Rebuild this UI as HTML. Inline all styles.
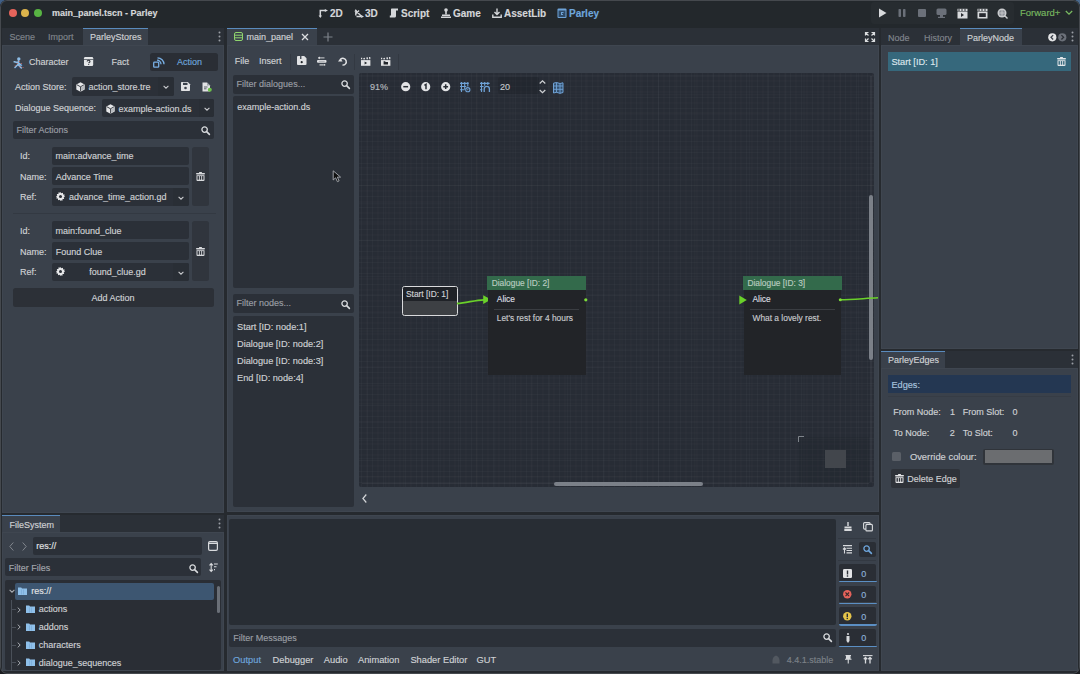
<!DOCTYPE html>
<html><head><meta charset="utf-8">
<style>
*{box-sizing:border-box;margin:0;padding:0}
html,body{width:1080px;height:674px;overflow:hidden;background:#1b1d21}
.corner{position:absolute;width:8px;height:8px;background:#3f5f86}
body{position:relative;font-family:"Liberation Sans",sans-serif;font-size:9px;color:#cfd1d4}
.a{position:absolute}
.t{position:absolute;white-space:pre;line-height:12px;height:12px;-webkit-text-stroke:0.15px currentColor}
.dim{color:#80858c}
.ph{color:#9a9ea4}
.blue{color:#6ea6dc}
.win{left:0;top:0;width:1080px;height:674px;background:#262a2f;border-radius:7px;overflow:hidden}
.title{left:0;top:0;width:1080px;height:28px;background:#23282c}
.tabbar{background:#2b3037}
.panel{background:#3a414b;box-shadow:inset 0 0 0 1px #3f4650}
.tab{background:#3a414b;border-top:1.5px solid #5a8bbd}
.inp{background:#2b3038;border-radius:2px}
.sep{background:#2c3038}
svg{position:absolute;overflow:visible}
</style></head><body>
<div class="corner" style="left:0;top:0"></div><div class="corner" style="right:0;top:0;background:#4a6a8e"></div>
<div class="a win">
  <!-- title bar -->
  <div class="a title"></div>
  <div class="a" style="left:8.5px;top:8.5px;width:8px;height:8px;border-radius:50%;background:#e5645b"></div>
  <div class="a" style="left:21px;top:8.5px;width:8px;height:8px;border-radius:50%;background:#dcb44c"></div>
  <div class="a" style="left:33.5px;top:8.5px;width:8px;height:8px;border-radius:50%;background:#58b443"></div>
  <div class="t" style="left:52px;top:7px;font-weight:bold;color:#d6d8da">main_panel.tscn - Parley</div>

  
  <!-- main toolbar -->
  <svg style="left:317.8px;top:8.8px" width="10" height="9" viewBox="0 0 10 9"><path d="M2.3 7.2V1.5H7.5" fill="none" stroke="#d4d6d9" stroke-width="1.5"/><path d="M6.8 0L10 1.5 6.8 3z" fill="#d4d6d9"/><path d="M0.6 6.4L2.3 9 4 6.4z" fill="#d4d6d9"/></svg>
  <div class="t" style="left:330px;top:7.8px;font-weight:bold;font-size:10px;color:#d4d6d9">2D</div>
  <svg style="left:353.8px;top:8.8px" width="10" height="9" viewBox="0 0 10 9"><path d="M1.8 2.4V6.5M1.8 1.8L7.5 7.3M5 1.5L1.5 5M2.5 7.5H7.6" fill="none" stroke="#d4d6d9" stroke-width="1.4"/><path d="M0.3 2.6L1.8 0 3.3 2.6z" fill="#d4d6d9"/><path d="M7.2 6L10 7.5 7.2 9z" fill="#d4d6d9"/></svg>
  <div class="t" style="left:365px;top:7.8px;font-weight:bold;font-size:10px;color:#d4d6d9">3D</div>
  <svg style="left:389px;top:8px" width="10" height="10" viewBox="0 0 10 10"><path d="M3 0.5h6v2h-2v5.5c0 1-0.8 1.5-1.5 1.5H0.8v-2H2V1.5c0-0.6 0.4-1 1-1z" fill="#d4d6d9"/></svg>
  <div class="t" style="left:401px;top:7.8px;font-weight:bold;font-size:10px;color:#d4d6d9">Script</div>
  <svg style="left:441px;top:8px" width="10" height="10" viewBox="0 0 10 10"><circle cx="5" cy="2" r="1.8" fill="#d4d6d9"/><rect x="4.2" y="3" width="1.6" height="3.5" fill="#d4d6d9"/><rect x="1" y="6.5" width="8" height="1.5" fill="#d4d6d9"/><rect x="0" y="8.5" width="10" height="1.5" fill="#d4d6d9"/></svg>
  <div class="t" style="left:453px;top:7.8px;font-weight:bold;font-size:10px;color:#d4d6d9">Game</div>
  <svg style="left:492px;top:8px" width="10" height="10" viewBox="0 0 10 10"><path d="M5 0.5v6M2.5 4l2.5 2.5L7.5 4M0.8 6.5v2.8h8.4V6.5" fill="none" stroke="#d4d6d9" stroke-width="1.4"/></svg>
  <div class="t" style="left:504px;top:7.8px;font-weight:bold;font-size:10px;color:#d4d6d9">AssetLib</div>
  <svg style="left:557px;top:8px" width="10" height="10" viewBox="0 0 10 10"><rect x="0.5" y="0.5" width="9" height="9.5" rx="1" fill="#6ea3d8"/><rect x="1.5" y="2.5" width="7" height="6.5" fill="#2f4a66"/><path d="M4 4h2.5v1H5v1h1v1H4z" fill="#6ea3d8"/></svg>
  <div class="t" style="left:569px;top:7.8px;font-weight:bold;font-size:10px;color:#6ea6dc">Parley</div>

  <!-- run bar -->
  <div class="a" style="left:871px;top:2px;width:143px;height:22px;background:#272c30;border-radius:3px"></div>
  <svg style="left:878px;top:8px" width="9" height="10" viewBox="0 0 9 10"><path d="M1 0.5L8.5 5 1 9.5z" fill="#d8dadd"/></svg>
  <svg style="left:898px;top:9px" width="8" height="8" viewBox="0 0 8 8"><rect x="0.5" y="0" width="2.5" height="8" rx="0.8" fill="#6b7079"/><rect x="5" y="0" width="2.5" height="8" rx="0.8" fill="#6b7079"/></svg>
  <svg style="left:918px;top:9px" width="8" height="8" viewBox="0 0 8 8"><rect x="0" y="0" width="8" height="8" rx="1" fill="#6b7079"/></svg>
  <svg style="left:936px;top:8px" width="11" height="10" viewBox="0 0 11 10"><rect x="0.5" y="0.5" width="10" height="6.5" rx="1.5" fill="#6b7079"/><rect x="4" y="7" width="3" height="2" fill="#6b7079"/><rect x="2" y="8.8" width="7" height="1.2" fill="#6b7079"/></svg>
  <svg style="left:957px;top:8px" width="11" height="11" viewBox="0 0 11 11"><path d="M0.5 3.5h10v7h-10z" fill="#d8dadd"/><path d="M0.5 0.8l10 0v2.2h-10z" fill="#d8dadd"/><path d="M2 0.8v2.2M5 0.8v2.2M8 0.8v2.2" stroke="#272a30" stroke-width="1"/><path d="M4 5l3 2-3 2z" fill="#272a30"/></svg>
  <svg style="left:977px;top:8px" width="11" height="11" viewBox="0 0 11 11"><path d="M0.5 3.5h10v7h-10z" fill="#d8dadd"/><path d="M0.5 0.8l10 0v2.2h-10z" fill="#d8dadd"/><path d="M2 0.8v2.2M5 0.8v2.2M8 0.8v2.2" stroke="#272a30" stroke-width="1"/><rect x="2.2" y="5.2" width="6.6" height="3.8" fill="#272a30"/></svg>
  <svg style="left:997px;top:8px" width="11" height="11" viewBox="0 0 11 11"><circle cx="5" cy="5" r="4.5" fill="#c9cbce"/><circle cx="5" cy="5" r="3" fill="#8c9097"/><path d="M2 5h6M5 2v6" stroke="#c9cbce" stroke-width="0.9"/><path d="M7.5 7.5l3 3" stroke="#c9cbce" stroke-width="1.4"/></svg>
  <div class="t" style="left:1020px;top:7px;font-size:9.5px;color:#78b860">Forward+</div>
  <svg style="left:1065px;top:10px" width="8" height="6" viewBox="0 0 8 6"><path d="M0.8 1l3.2 3.2L7.2 1" fill="none" stroke="#78b860" stroke-width="1.3"/></svg>

  <!-- left dock tab bar -->
  <div class="a tabbar" style="left:2px;top:28px;width:222px;height:17px"></div>
  <div class="a panel" style="left:2px;top:45px;width:222px;height:468px"></div>

  <!-- filesystem dock -->
  <div class="a tabbar" style="left:2px;top:515px;width:222px;height:17px"></div>
  <div class="a panel" style="left:2px;top:532px;width:222px;height:139px"></div>

  <!-- main panel -->
  <div class="a tabbar" style="left:227px;top:28px;width:652px;height:17px"></div>
  <div class="a panel" style="left:227px;top:45px;width:652px;height:467px"></div>

  <!-- bottom panel -->
  <div class="a panel" style="left:227px;top:515px;width:652px;height:156px"></div>

  <!-- right dock -->
  <div class="a tabbar" style="left:881px;top:28px;width:197px;height:17px"></div>
  <div class="a panel" style="left:881px;top:45px;width:197px;height:304px"></div>
  <div class="a tabbar" style="left:881px;top:351px;width:197px;height:17px"></div>
  <div class="a panel" style="left:881px;top:368px;width:197px;height:303px"></div>


  <!-- ===== left dock content ===== -->
  <svg style="left:13px;top:57px" width="12" height="13" viewBox="0 0 12 13"><circle cx="5.8" cy="1.9" r="1.7" fill="#8dbce6"/><path d="M5.5 3.8L5 7.5M1.2 4.8L5.3 5.8 8.5 8.3M5 7.5L2 10.5M5 7.5L8.3 11" fill="none" stroke="#8dbce6" stroke-width="1.6" stroke-linecap="round"/><circle cx="6.3" cy="4.5" r="0.55" fill="#d6685f"/><circle cx="4.3" cy="6.5" r="0.55" fill="#d6685f"/><circle cx="8.6" cy="6.5" r="0.55" fill="#d6685f"/><circle cx="2.2" cy="8.8" r="0.55" fill="#d6685f"/><circle cx="7" cy="9.6" r="0.55" fill="#d6685f"/><circle cx="10" cy="10.5" r="0.55" fill="#d6685f"/><circle cx="9.2" cy="8" r="0.7" fill="#24446e"/><circle cx="4.5" cy="10.5" r="0.7" fill="#24446e"/><circle cx="6.5" cy="11.5" r="0.7" fill="#24446e"/><circle cx="10.5" cy="9" r="0.6" fill="#24446e"/><circle cx="3.5" cy="11.8" r="0.6" fill="#24446e"/></svg>
<div class="t " style="left:29px;top:56.18px;">Character</div>
  <svg style="left:83.7px;top:57.2px" width="9.2" height="9" viewBox="0 0 9.2 9"><rect width="9.2" height="9" rx="1.3" fill="#e4e6e8"/><rect x="0" y="2" width="9.2" height="0.7" fill="#3a414b"/><path d="M3.2 4.6c0-0.9 0.6-1.3 1.4-1.3s1.4 0.5 1.4 1.1c0 0.9-1.2 0.9-1.2 1.8" fill="none" stroke="#2a2e35" stroke-width="1.1"/><rect x="4.2" y="7.1" width="1" height="0.9" fill="#2a2e35"/></svg>
<div class="t " style="left:111.5px;top:56.18px;">Fact</div>
  <div class="a" style="left:150px;top:52.5px;width:68px;height:18.5px;background:#2a2e35;border-radius:2.5px"></div>
  <svg style="left:153px;top:56.5px" width="12" height="11" viewBox="0 0 12 11"><rect x="0.7" y="5.2" width="5" height="5" rx="0.8" fill="none" stroke="#78aee3" stroke-width="1.3"/><path d="M4 3.2a4 4 0 0 1 4 4M4.5 0.8a6.5 6.5 0 0 1 6.5 6.5" fill="none" stroke="#78aee3" stroke-width="1.3"/></svg>
<div class="t blue" style="left:177px;top:56.18px;">Action</div>
<div class="t " style="left:15px;top:80.78px;">Action Store:</div>
  <div class="a inp" style="left:72px;top:77px;width:102px;height:18.5px"></div>
  <div class="a" style="left:158px;top:77px;width:16px;height:18.5px;background:#292e35;border-radius:0 2px 2px 0"></div>
<svg style="left:76px;top:81.5px" width="9" height="10" viewBox="0 0 9 10"><path d="M4.5 0.3L8.7 2.5v5L4.5 9.7 0.3 7.5v-5z" fill="#e6e7e9"/><path d="M0.8 2.7L4.5 4.8 8.2 2.7M4.5 4.8v4.6" fill="none" stroke="#2a2e35" stroke-width="0.9"/><path d="M4.9 5.2L8.2 3.4v3.9L4.9 9.1z" fill="#b8bbbf"/></svg><div class="t " style="left:88.5px;top:81.08px;">action_store.tre</div><svg style="left:163px;top:85px" width="6" height="4" viewBox="0 0 6 4"><path d="M0.6 0.8L3 3.2 5.4 0.8" fill="none" stroke="#c8cacd" stroke-width="1.1"/></svg>
  <svg style="left:181px;top:82px" width="9" height="9" viewBox="0 0 9 9"><path d="M0 1c0-0.6 0.4-1 1-1h5.8L9 2.2V8c0 0.6-0.4 1-1 1H1C0.4 9 0 8.6 0 8z" fill="#e1e2e4"/><rect x="2" y="0.8" width="4.5" height="2.2" fill="#3a414b"/><circle cx="4.5" cy="6" r="1.3" fill="#3a414b"/></svg>
  <svg style="left:201.5px;top:81.5px" width="10" height="10" viewBox="0 0 10 10"><path d="M0.5 0.5h4.5l3 3V9.5h-7.5z" fill="#e1e2e4"/><path d="M5 0.5v3h3" fill="#9ea2a8"/><path d="M2 5h3.5M2 6.8h2.5" stroke="#3a414b" stroke-width="0.8"/><circle cx="7.8" cy="7.8" r="2" fill="#6cc04a"/></svg>
<div class="t " style="left:15px;top:102.48px;">Dialogue Sequence:</div>
  <div class="a inp" style="left:102px;top:99px;width:112px;height:18px"></div>
  <div class="a" style="left:198.5px;top:99px;width:15.5px;height:18px;background:#292e35;border-radius:0 2px 2px 0"></div>
<svg style="left:105.5px;top:103.5px" width="9" height="10" viewBox="0 0 9 10"><path d="M4.5 0.3L8.7 2.5v5L4.5 9.7 0.3 7.5v-5z" fill="#e6e7e9"/><path d="M0.8 2.7L4.5 4.8 8.2 2.7M4.5 4.8v4.6" fill="none" stroke="#2a2e35" stroke-width="0.9"/><path d="M4.9 5.2L8.2 3.4v3.9L4.9 9.1z" fill="#b8bbbf"/></svg><div class="t " style="left:118.5px;top:102.68px;">example-action.ds</div><svg style="left:203.5px;top:107px" width="6" height="4" viewBox="0 0 6 4"><path d="M0.6 0.8L3 3.2 5.4 0.8" fill="none" stroke="#c8cacd" stroke-width="1.1"/></svg>
  <div class="a inp" style="left:12.5px;top:121px;width:201.5px;height:18px"></div>
<div class="t ph" style="left:16.5px;top:123.98px;">Filter Actions</div><svg style="left:200.5px;top:125.5px" width="9" height="9" viewBox="0 0 9 9"><circle cx="3.6" cy="3.6" r="2.7" fill="none" stroke="#d8dadd" stroke-width="1.3"/><path d="M5.6 5.6L8.4 8.4" stroke="#d8dadd" stroke-width="1.6" stroke-linecap="round"/></svg>
<div class="t " style="left:20px;top:150.08px;">Id:</div><div class="t " style="left:20px;top:170.78px;">Name:</div><div class="t " style="left:20px;top:191.38px;">Ref:</div><div class="a inp" style="left:52px;top:146.5px;width:137px;height:18px"></div><div class="a inp" style="left:52px;top:167.3px;width:137px;height:18.2px"></div><div class="a inp" style="left:52px;top:188.3px;width:137px;height:18px"></div><div class="a" style="left:173px;top:188.3px;width:16px;height:18px;background:#292e35;border-radius:0 2px 2px 0"></div><div class="a" style="left:191.8px;top:146.5px;width:17px;height:59.8px;background:#30353d;border-radius:2.5px"></div><div class="t " style="left:55.5px;top:150.08px;">main:advance_time</div><div class="t " style="left:55.8px;top:170.78px;">Advance Time</div><div class="t " style="left:69px;top:191.38px;">advance_time_action.gd</div><svg style="left:55.8px;top:192.0px" width="9" height="9" viewBox="0 0 9 9"><path d="M4.5 0l0.9 1.3 1.5-0.5 0.2 1.6 1.6 0.2-0.5 1.5L9 4.5l-1.3 0.9 0.5 1.5-1.6 0.2-0.2 1.6-1.5-0.5L4.5 9l-0.9-1.3-1.5 0.5-0.2-1.6-1.6-0.2 0.5-1.5L0 4.5l1.3-0.9-0.5-1.5 1.6-0.2 0.2-1.6 1.5 0.5z" fill="#e6e7e9"/><circle cx="4.5" cy="4.5" r="1.5" fill="#2b3038"/></svg><svg style="left:178px;top:196.0px" width="6" height="4" viewBox="0 0 6 4"><path d="M0.6 0.8L3 3.2 5.4 0.8" fill="none" stroke="#c8cacd" stroke-width="1.1"/></svg><svg style="left:196px;top:172.0px" width="9" height="9" viewBox="0 0 9 9"><rect x="3" y="0" width="3" height="1.2" rx="0.4" fill="#d8dadd"/><rect x="0" y="0.9" width="9" height="1.7" rx="0.8" fill="#d8dadd"/><path d="M0.5 3.2h8v4.9c0 0.5-0.4 0.9-0.9 0.9H1.4c-0.5 0-0.9-0.4-0.9-0.9z" fill="#d8dadd"/><rect x="1.5" y="4.1" width="1.4" height="3.6" fill="#2c3038"/><rect x="3.8" y="4.1" width="1.4" height="3.6" fill="#2c3038"/><rect x="6.1" y="4.1" width="1.4" height="3.6" fill="#2c3038"/></svg><div class="a" style="left:12.5px;top:213px;width:203px;height:1px;background:#333942"></div><div class="t " style="left:20px;top:224.88px;">Id:</div><div class="t " style="left:20px;top:245.58px;">Name:</div><div class="t " style="left:20px;top:266.18px;">Ref:</div><div class="a inp" style="left:52px;top:221.3px;width:137px;height:18px"></div><div class="a inp" style="left:52px;top:242.10000000000002px;width:137px;height:18.2px"></div><div class="a inp" style="left:52px;top:263.1px;width:137px;height:18px"></div><div class="a" style="left:173px;top:263.1px;width:16px;height:18px;background:#292e35;border-radius:0 2px 2px 0"></div><div class="a" style="left:191.8px;top:221.3px;width:17px;height:59.8px;background:#30353d;border-radius:2.5px"></div><div class="t " style="left:55.5px;top:224.88px;">main:found_clue</div><div class="t " style="left:55.8px;top:245.58px;">Found Clue</div><div class="t " style="left:89.2px;top:266.18px;">found_clue.gd</div><svg style="left:55.8px;top:266.8px" width="9" height="9" viewBox="0 0 9 9"><path d="M4.5 0l0.9 1.3 1.5-0.5 0.2 1.6 1.6 0.2-0.5 1.5L9 4.5l-1.3 0.9 0.5 1.5-1.6 0.2-0.2 1.6-1.5-0.5L4.5 9l-0.9-1.3-1.5 0.5-0.2-1.6-1.6-0.2 0.5-1.5L0 4.5l1.3-0.9-0.5-1.5 1.6-0.2 0.2-1.6 1.5 0.5z" fill="#e6e7e9"/><circle cx="4.5" cy="4.5" r="1.5" fill="#2b3038"/></svg><svg style="left:178px;top:270.8px" width="6" height="4" viewBox="0 0 6 4"><path d="M0.6 0.8L3 3.2 5.4 0.8" fill="none" stroke="#c8cacd" stroke-width="1.1"/></svg><svg style="left:196px;top:246.8px" width="9" height="9" viewBox="0 0 9 9"><rect x="3" y="0" width="3" height="1.2" rx="0.4" fill="#d8dadd"/><rect x="0" y="0.9" width="9" height="1.7" rx="0.8" fill="#d8dadd"/><path d="M0.5 3.2h8v4.9c0 0.5-0.4 0.9-0.9 0.9H1.4c-0.5 0-0.9-0.4-0.9-0.9z" fill="#d8dadd"/><rect x="1.5" y="4.1" width="1.4" height="3.6" fill="#2c3038"/><rect x="3.8" y="4.1" width="1.4" height="3.6" fill="#2c3038"/><rect x="6.1" y="4.1" width="1.4" height="3.6" fill="#2c3038"/></svg><div class="a" style="left:12.7px;top:288.4px;width:201.5px;height:18.6px;background:#2c3037;border-radius:2.5px"></div><div class="t " style="left:91.5px;top:292.08px;">Add Action</div>
  <!-- ===== filesystem ===== -->
<svg style="left:9px;top:541.5px" width="5" height="9" viewBox="0 0 5 9"><path d="M4.3 0.5L0.8 4.5 4.3 8.5" fill="none" stroke="#81868d" stroke-width="1"/></svg><svg style="left:21.5px;top:541.5px" width="5" height="9" viewBox="0 0 5 9"><path d="M0.7 0.5L4.2 4.5 0.7 8.5" fill="none" stroke="#81868d" stroke-width="1"/></svg><div class="a" style="left:33px;top:537px;width:168.5px;height:18px;background:#2b3038;border-radius:2px"></div><div class="t " style="left:36.3px;top:540.08px;color:#e2e3e5">res://</div><svg style="left:208px;top:541px" width="10" height="10" viewBox="0 0 10 10"><rect x="0.6" y="0.6" width="8.8" height="8.8" rx="1.3" fill="none" stroke="#d8dadd" stroke-width="1.2"/><path d="M0.6 2.4h8.8" stroke="#d8dadd" stroke-width="1.2"/></svg><div class="a" style="left:5.2px;top:558.3px;width:196.3px;height:18.2px;background:#2b3038;border-radius:2px"></div><div class="t " style="left:8.8px;top:561.68px;color:#a3a7ad">Filter Files</div><svg style="left:188.6px;top:563.5px" width="9" height="9" viewBox="0 0 9 9"><circle cx="3.6" cy="3.6" r="2.7" fill="none" stroke="#d8dadd" stroke-width="1.3"/><path d="M5.6 5.6L8.4 8.4" stroke="#d8dadd" stroke-width="1.6" stroke-linecap="round"/></svg><svg style="left:208.5px;top:563px" width="9" height="9" viewBox="0 0 9 9"><path d="M2.2 0.8v7.4M0.5 2.3L2.2 0.6 3.9 2.3M0.5 6.7l1.7 1.7 1.7-1.7M5 1h3.8M5 3.8h2.5M5 6.6h1" fill="none" stroke="#d8dadd" stroke-width="1.1"/></svg><div class="a" style="left:5.2px;top:580.2px;width:216px;height:90px;background:#2a2e35;border-radius:2px"></div><div class="a" style="left:15px;top:582.5px;width:199px;height:17.2px;background:#3d5671;border-radius:2px"></div><svg style="left:8.8px;top:589.3px" width="6" height="4" viewBox="0 0 6 4"><path d="M0.6 0.8L3 3.2 5.4 0.8" fill="none" stroke="#a8acb2" stroke-width="1.1"/></svg><svg style="left:18.2px;top:587px" width="9" height="8" viewBox="0 0 9 8"><path d="M0 0.5h3.2l0.8 1H9V8H0z" fill="#8fc0ea"/><path d="M3.5 2.5v5M5.5 2.5v5" stroke="#5b8fc0" stroke-width="0.5" opacity="0.6"/></svg><div class="t " style="left:31.2px;top:584.78px;color:#e2e3e5">res://</div><div class="a" style="left:216.5px;top:586px;width:3.6px;height:27px;background:#6a6f77;border-radius:2px"></div><div class="a" style="left:10.8px;top:600px;width:1px;height:71px;background:#4a5059;"></div><div class="a" style="left:11.8px;top:609.0px;width:4px;height:1px;background:#4a5059;"></div><svg style="left:17px;top:606.5px" width="4" height="6" viewBox="0 0 4 6"><path d="M0.7 0.6L3.2 3 0.7 5.4" fill="none" stroke="#a8acb2" stroke-width="1"/></svg><svg style="left:25.5px;top:605.0px" width="9" height="8" viewBox="0 0 9 8"><path d="M0 0.5h3.2l0.8 1H9V8H0z" fill="#8fc0ea"/><path d="M3.5 2.5v5M5.5 2.5v5" stroke="#5b8fc0" stroke-width="0.5" opacity="0.6"/></svg><div class="t " style="left:38.8px;top:603.38px;">actions</div><div class="a" style="left:11.8px;top:626.8px;width:4px;height:1px;background:#4a5059;"></div><svg style="left:17px;top:624.3px" width="4" height="6" viewBox="0 0 4 6"><path d="M0.7 0.6L3.2 3 0.7 5.4" fill="none" stroke="#a8acb2" stroke-width="1"/></svg><svg style="left:25.5px;top:622.8px" width="9" height="8" viewBox="0 0 9 8"><path d="M0 0.5h3.2l0.8 1H9V8H0z" fill="#8fc0ea"/><path d="M3.5 2.5v5M5.5 2.5v5" stroke="#5b8fc0" stroke-width="0.5" opacity="0.6"/></svg><div class="t " style="left:38.8px;top:621.18px;">addons</div><div class="a" style="left:11.8px;top:644.6px;width:4px;height:1px;background:#4a5059;"></div><svg style="left:17px;top:642.1px" width="4" height="6" viewBox="0 0 4 6"><path d="M0.7 0.6L3.2 3 0.7 5.4" fill="none" stroke="#a8acb2" stroke-width="1"/></svg><svg style="left:25.5px;top:640.6px" width="9" height="8" viewBox="0 0 9 8"><path d="M0 0.5h3.2l0.8 1H9V8H0z" fill="#8fc0ea"/><path d="M3.5 2.5v5M5.5 2.5v5" stroke="#5b8fc0" stroke-width="0.5" opacity="0.6"/></svg><div class="t " style="left:38.8px;top:638.98px;">characters</div><div class="a" style="left:11.8px;top:662.4px;width:4px;height:1px;background:#4a5059;"></div><svg style="left:17px;top:659.9px" width="4" height="6" viewBox="0 0 4 6"><path d="M0.7 0.6L3.2 3 0.7 5.4" fill="none" stroke="#a8acb2" stroke-width="1"/></svg><svg style="left:25.5px;top:658.4px" width="9" height="8" viewBox="0 0 9 8"><path d="M0 0.5h3.2l0.8 1H9V8H0z" fill="#8fc0ea"/><path d="M3.5 2.5v5M5.5 2.5v5" stroke="#5b8fc0" stroke-width="0.5" opacity="0.6"/></svg><div class="t " style="left:38.8px;top:656.78px;">dialogue_sequences</div>
  <!-- ===== main panel ===== -->
<div class="t " style="left:234.8px;top:55.48px;">File</div><div class="t " style="left:258.9px;top:55.48px;">Insert</div><div class="a" style="left:290px;top:53.5px;width:1px;height:16px;background:#333942;"></div><div class="a" style="left:353.7px;top:53.5px;width:1px;height:16px;background:#333942;"></div><div class="a" style="left:397.5px;top:53.5px;width:1px;height:16px;background:#333942;"></div><svg style="left:297px;top:56.4px" width="9.5" height="9" viewBox="0 0 9.5 9"><path d="M0 0.9C0 0.4 0.4 0 0.9 0h6.3l2.3 2.3v5.8c0 0.5-0.4 0.9-0.9 0.9H0.9C0.4 9 0 8.6 0 8.1z" fill="#e1e2e4"/><rect x="3.1" y="0" width="1.3" height="3" fill="#3a414b"/><circle cx="4.7" cy="6.2" r="1.1" fill="#1e2227"/></svg><svg style="left:317px;top:56.6px" width="9.5" height="9" viewBox="0 0 9.5 9"><path d="M2.5 0.9h5M1.3 0.9l1.2-0.8v1.6z" stroke="#e1e2e4" stroke-width="0.9" fill="#e1e2e4"/><rect x="0" y="2.9" width="9.5" height="2.8" rx="1" fill="#e1e2e4"/><path d="M1.8 4.3h5.9" stroke="#7d8189" stroke-width="0.6"/><path d="M2.5 7.9h4.3" stroke="#e1e2e4" stroke-width="1.1"/><circle cx="7.6" cy="7.9" r="0.8" fill="#e1e2e4"/></svg><svg style="left:337.6px;top:56.8px" width="9.5" height="8.8" viewBox="0 0 9.5 8.8"><path d="M2.6 2.2A3.4 3.4 0 1 1 4.5 8.1" fill="none" stroke="#e1e2e4" stroke-width="1.5"/><path d="M0 4.6L2.4 1.3 4.6 4.4z" fill="#e1e2e4"/></svg><svg style="left:360.8px;top:56.8px" width="9.4" height="8.8" viewBox="0 0 9.4 8.8"><path d="M0 0.8h1.2v1.5H0zM2.2 1.2l1.6-0.4 0.4 1.5-1.6 0.1zM5.3 0.5l1.5-0.2 0.3 1.9-1.5 0.1zM8 0.1l1.3-0.1 0.1 2.2-1.1 0z" fill="#e1e2e4"/><rect x="0" y="3.1" width="9.4" height="5.7" fill="#e1e2e4"/><path d="M3.6 4.4l2.6 1.6-2.6 1.6z" fill="#22262b"/></svg><svg style="left:380.8px;top:56.8px" width="9.4" height="8.8" viewBox="0 0 9.4 8.8"><path d="M0 0.8h1.2v1.5H0zM2.2 1.2l1.6-0.4 0.4 1.5-1.6 0.1zM5.3 0.5l1.5-0.2 0.3 1.9-1.5 0.1zM8 0.1l1.3-0.1 0.1 2.2-1.1 0z" fill="#e1e2e4"/><rect x="0" y="3.1" width="9.4" height="5.7" fill="#e1e2e4"/><path d="M2.6 4.3h1.5l0.5 0.6h2.4v2.7H2.6z" fill="#22262b"/></svg><div class="a" style="left:232.8px;top:75px;width:121.4px;height:18.5px;background:#2b3038;border-radius:2px"></div><div class="t ph" style="left:236.6px;top:78.38px;">Filter dialogues...</div><svg style="left:341px;top:79.8px" width="9" height="9" viewBox="0 0 9 9"><circle cx="3.6" cy="3.6" r="2.7" fill="none" stroke="#d8dadd" stroke-width="1.3"/><path d="M5.6 5.6L8.4 8.4" stroke="#d8dadd" stroke-width="1.6" stroke-linecap="round"/></svg><div class="a" style="left:232.8px;top:96.3px;width:121.4px;height:191.5px;background:#2b3038;border-radius:2px"></div><div class="t " style="left:237.2px;top:101.08px;">example-action.ds</div><div class="a" style="left:232.8px;top:294.3px;width:121.4px;height:18.3px;background:#2b3038;border-radius:2px"></div><div class="t ph" style="left:236.5px;top:297.48px;">Filter nodes...</div><svg style="left:341px;top:299.5px" width="9" height="9" viewBox="0 0 9 9"><circle cx="3.6" cy="3.6" r="2.7" fill="none" stroke="#d8dadd" stroke-width="1.3"/><path d="M5.6 5.6L8.4 8.4" stroke="#d8dadd" stroke-width="1.6" stroke-linecap="round"/></svg><div class="a" style="left:232.8px;top:315.6px;width:121.4px;height:191.6px;background:#2b3038;border-radius:2px"></div><div class="t " style="left:237px;top:320.68px;font-size:9.2px;">Start [ID: node:1]</div><div class="t " style="left:237px;top:337.78px;font-size:9.2px;">Dialogue [ID: node:2]</div><div class="t " style="left:237px;top:354.88px;font-size:9.2px;">Dialogue [ID: node:3]</div><div class="t " style="left:237px;top:371.98px;font-size:9.2px;">End [ID: node:4]</div><div class="a" style="left:358.8px;top:73px;width:515.4px;height:414px;background-color:#272c35;background-image:linear-gradient(rgba(255,255,255,0.022) 1px,transparent 1px),linear-gradient(90deg,rgba(255,255,255,0.022) 1px,transparent 1px);background-size:5.5px 5.5px;background-position:2px 2px;border-radius:2px"></div><div class="a" style="left:358.8px;top:73px;width:515.4px;height:414px;background-image:linear-gradient(rgba(255,255,255,0.018) 1px,transparent 1px),linear-gradient(90deg,rgba(255,255,255,0.018) 1px,transparent 1px);background-size:18.2px 18.2px;background-position:8px 3px"></div><div class="t " style="left:370px;top:81.48px;color:#b5b8bd">91%</div><svg style="left:400.6px;top:82.2px" width="9.4" height="9.4" viewBox="0 0 9.4 9.4"><circle cx="4.7" cy="4.7" r="4.6" fill="#e3e4e6"/><path d="M2.3 4.7h4.8" stroke="#272c33" stroke-width="1.5"/></svg><svg style="left:420.5px;top:82.2px" width="9.4" height="9.4" viewBox="0 0 9.4 9.4"><circle cx="4.7" cy="4.7" r="4.6" fill="#e3e4e6"/><path d="M3.4 3.4l1.6-1V7.2" fill="none" stroke="#272c33" stroke-width="1.5"/></svg><svg style="left:440.5px;top:82.2px" width="9.4" height="9.4" viewBox="0 0 9.4 9.4"><circle cx="4.7" cy="4.7" r="4.6" fill="#e3e4e6"/><path d="M2.3 4.7h4.8M4.7 2.3v4.8" stroke="#272c33" stroke-width="1.5"/></svg><svg style="left:460px;top:82px" width="11" height="10" viewBox="0 0 11 10"><path d="M0 1.4h8.8M0 4.5h6.2M0 7.8h4.6M1.5 0v10M4.7 0v7.2M7.8 0v4.6" stroke="#6fa2d6" stroke-width="1.1"/><circle cx="7.8" cy="7.7" r="2.1" fill="none" stroke="#6fa2d6" stroke-width="1.1"/><circle cx="7.8" cy="7.7" r="0.6" fill="#6fa2d6"/></svg><svg style="left:480.3px;top:82px" width="10" height="10" viewBox="0 0 10 10"><path d="M0 1.4h9.6M0 4.5h3.6M0 7.8h2.4M1.5 0v10M4.7 0v3.8M7.8 0v3" stroke="#6fa2d6" stroke-width="1.1"/><path d="M4.2 10V6.9a2.6 2.6 0 0 1 5.2 0V10" fill="none" stroke="#6fa2d6" stroke-width="1.3"/></svg><div class="a" style="left:497.5px;top:77px;width:41px;height:17.2px;background:rgba(20,23,28,0.22);border-radius:2px"></div><div class="t " style="left:500px;top:80.88px;color:#c4c7cb">20</div><svg style="left:538.8px;top:80px" width="7" height="13.5" viewBox="0 0 7 13.5"><path d="M0.7 3.5L3.5 0.8 6.3 3.5M0.7 10L3.5 12.7 6.3 10" fill="none" stroke="#d0d2d5" stroke-width="1.2"/></svg><svg style="left:552.8px;top:81.5px" width="10.5" height="12" viewBox="0 0 10.5 12"><path d="M0.5 1.2L3.5 0.5 7 1.5 10 0.8V10.5L7 11.3 3.5 10.3 0.5 11z" fill="#34506e" stroke="#6fa2d6" stroke-width="1"/><path d="M3.5 0.5v10M7 1.5v10M0.5 4h9.5M0.5 7.3h9.5" stroke="#6fa2d6" stroke-width="0.9"/></svg><div class="a" style="left:362px;top:483.2px;width:507px;height:1.2px;background:rgba(255,255,255,0.05);"></div><div class="a" style="left:870.4px;top:76px;width:1.2px;height:406px;background:rgba(255,255,255,0.05);"></div><div class="a" style="left:554.2px;top:482px;width:148.8px;height:3.8px;background:#7b8088;border-radius:2px"></div><div class="a" style="left:869px;top:195px;width:4px;height:165px;background:#7b8088;border-radius:2px"></div><svg style="left:798px;top:436px" width="6" height="6" viewBox="0 0 6 6"><path d="M0.5 6V0.5H6" fill="none" stroke="#888d94" stroke-width="0.9"/></svg><div class="a" style="left:799px;top:437px;width:70px;height:46px;background:rgba(30,34,40,0.18);"></div><div class="a" style="left:825.2px;top:450.4px;width:21.2px;height:17.3px;background:#42464c;"></div><svg style="left:362px;top:493.5px" width="5" height="9" viewBox="0 0 5 9"><path d="M4.3 0.5L0.9 4.5 4.3 8.5" fill="none" stroke="#d4d6d9" stroke-width="1.2"/></svg>
  <!-- ===== graph nodes ===== -->
<div class="a" style="left:401.6px;top:285.9px;width:56.8px;height:30px;background:#3d4044;border:1.2px solid #d9dadc;border-radius:2.5px"></div><div class="a" style="left:402.8px;top:287.1px;width:54.4px;height:14px;background:#1f2227;border-radius:1.5px 1.5px 0 0"></div><div class="t " style="left:406px;top:288.38px;font-size:8.4px;color:#d0d2d5">Start [ID: 1]</div><svg style="left:456px;top:293px" width="36" height="14" viewBox="0 0 36 14"><path d="M1 10.5C10 10.5 18 7 28 6.8" fill="none" stroke="#6ad12a" stroke-width="1.8"/><path d="M27.2 2.2L35 6.5 27.2 11z" fill="#6ad12a"/></svg><div class="a" style="left:488.40000000000003px;top:290px;width:97.2px;height:85px;background:#222428;"></div><div class="a" style="left:487.1px;top:275.9px;width:99.4px;height:14.2px;background:#336a4b;"></div><div class="t " style="left:491.70000000000005px;top:277.18px;font-size:8.4px;color:#b9ccc0">Dialogue [ID: 2]</div><div class="t " style="left:496.8px;top:293.38px;font-size:8.4px;color:#dcdee0">Alice</div><div class="a" style="left:494.3px;top:308.5px;width:85px;height:1px;background:#3a3d42;"></div><div class="t " style="left:496.8px;top:312.28px;font-size:8.4px;color:#c8cacd">Let's rest for 4 hours</div><svg style="left:584.3px;top:297.7px" width="3.6" height="3.6" viewBox="0 0 3.6 3.6"><circle cx="1.8" cy="1.8" r="1.6" fill="#7ddc3a"/></svg><div class="a" style="left:744.0999999999999px;top:290px;width:97.2px;height:85px;background:#222428;"></div><div class="a" style="left:742.8px;top:275.9px;width:99.4px;height:14.2px;background:#336a4b;"></div><div class="t " style="left:747.4px;top:277.18px;font-size:8.4px;color:#b9ccc0">Dialogue [ID: 3]</div><div class="t " style="left:752.5px;top:293.38px;font-size:8.4px;color:#dcdee0">Alice</div><div class="a" style="left:750.0px;top:308.5px;width:85px;height:1px;background:#3a3d42;"></div><div class="t " style="left:752.5px;top:312.28px;font-size:8.4px;color:#c8cacd">What a lovely rest.</div><svg style="left:739px;top:295px" width="8" height="10" viewBox="0 0 8 10"><path d="M0.3 0.5L7.8 5 0.3 9.5z" fill="#6ad12a"/></svg><svg style="left:838px;top:294px" width="40" height="8" viewBox="0 0 40 8"><path d="M2 5.8C14 5.5 26 4.5 40 3.8" fill="none" stroke="#6ad12a" stroke-width="1.5"/><circle cx="2.3" cy="5.8" r="1.5" fill="#7ddc3a"/></svg>
  <!-- ===== bottom panel ===== -->
<div class="a" style="left:229.3px;top:518.9px;width:606.8px;height:106.5px;background:#282d34;border-radius:2px"></div><div class="a" style="left:229.3px;top:628.6px;width:606.8px;height:18.3px;background:#2b3038;border-radius:2px"></div><div class="t " style="left:233.3px;top:632.08px;color:#9a9ea4">Filter Messages</div><svg style="left:822.9px;top:632.8px" width="9" height="9" viewBox="0 0 9 9"><circle cx="3.6" cy="3.6" r="2.7" fill="none" stroke="#d8dadd" stroke-width="1.3"/><path d="M5.6 5.6L8.4 8.4" stroke="#d8dadd" stroke-width="1.6" stroke-linecap="round"/></svg><div class="t blue" style="left:233.1px;top:653.58px;font-size:9.3px;">Output</div><div class="t " style="left:272.6px;top:653.58px;font-size:9.3px;">Debugger</div><div class="t " style="left:323.8px;top:653.58px;font-size:9.3px;">Audio</div><div class="t " style="left:358px;top:653.58px;font-size:9.3px;">Animation</div><div class="t " style="left:410.4px;top:653.58px;font-size:9.3px;">Shader Editor</div><div class="t " style="left:476.6px;top:653.58px;font-size:9.3px;">GUT</div><div class="t " style="left:786.8px;top:653.78px;color:#7c8188">4.4.1.stable</div><svg style="left:772px;top:655px" width="8" height="9" viewBox="0 0 8 9"><path d="M4 0.5C6 1 7.5 3 7.5 5.5V8.5H0.5V5.5C0.5 3 2 1 4 0.5z" fill="#525860"/></svg><svg style="left:843.8px;top:522.2px" width="8" height="9" viewBox="0 0 8 9"><rect x="3.3" y="0" width="1.4" height="4" fill="#d8dadd"/><path d="M0.5 4.5h7v1.8h-7z" fill="#d8dadd"/><path d="M0.3 6.8h7.4v2.2H0.3z" fill="#d8dadd"/></svg><svg style="left:862.7px;top:522.2px" width="10" height="9.5" viewBox="0 0 10 9.5"><rect x="0.6" y="0.6" width="6.5" height="6.5" rx="1" fill="none" stroke="#d8dadd" stroke-width="1.1"/><rect x="2.9" y="2.4" width="6.5" height="6.5" rx="1" fill="#3a414b" stroke="#d8dadd" stroke-width="1.1"/></svg><div class="a" style="left:838px;top:537.5px;width:38px;height:1px;background:#333942;"></div><svg style="left:843px;top:545px" width="9" height="8.5" viewBox="0 0 9 8.5"><path d="M0 0.6h9M3.5 3.2H9M3.5 5.5H9M3.5 7.9H9" stroke="#d8dadd" stroke-width="1.1"/><path d="M1.5 8.5V3M0 4.5l1.5-1.6L3 4.5" fill="none" stroke="#d8dadd" stroke-width="1.1"/></svg><div class="a" style="left:858.7px;top:541.7px;width:17.4px;height:15.6px;background:#2a2e35;border-radius:2px"></div><svg style="left:863px;top:545px" width="9" height="9" viewBox="0 0 9 9"><circle cx="3.6" cy="3.6" r="2.7" fill="none" stroke="#6ea6dc" stroke-width="1.3"/><path d="M5.6 5.6L8.4 8.4" stroke="#6ea6dc" stroke-width="1.6" stroke-linecap="round"/></svg><div class="a" style="left:838px;top:560.2px;width:38px;height:1px;background:#333942;"></div><div class="a" style="left:839px;top:564px;width:37.1px;height:16.700000000000045px;background:#2a2e35;border-radius:2px 2px 0 0"></div><div class="a" style="left:839px;top:580.7px;width:37.6px;height:1.4px;background:#5b8fc4;border-radius:0 0 2px 2px"></div><div class="t " style="left:861.3px;top:567.68px;color:#8db1d8">0</div><div class="a" style="left:839px;top:585.6px;width:37.1px;height:16.899999999999977px;background:#2a2e35;border-radius:2px 2px 0 0"></div><div class="a" style="left:839px;top:602.5px;width:37.6px;height:1.4px;background:#5b8fc4;border-radius:0 0 2px 2px"></div><div class="t " style="left:861.3px;top:589.28px;color:#8db1d8">0</div><div class="a" style="left:839px;top:607.2px;width:37.1px;height:17.0px;background:#2a2e35;border-radius:2px 2px 0 0"></div><div class="a" style="left:839px;top:624.2px;width:37.6px;height:1.4px;background:#5b8fc4;border-radius:0 0 2px 2px"></div><div class="t " style="left:861.3px;top:610.88px;color:#8db1d8">0</div><div class="a" style="left:839px;top:628.8px;width:37.1px;height:17.0px;background:#2a2e35;border-radius:2px 2px 0 0"></div><div class="a" style="left:839px;top:645.8px;width:37.6px;height:1.4px;background:#5b8fc4;border-radius:0 0 2px 2px"></div><div class="t " style="left:861.3px;top:632.48px;color:#8db1d8">0</div><svg style="left:843px;top:569px" width="9" height="9" viewBox="0 0 9 9"><rect width="9" height="9" rx="1.3" fill="#e3e4e6"/><rect x="3.8" y="1.5" width="1.4" height="4" fill="#2a2e35"/><rect x="3.8" y="6.3" width="1.4" height="1.4" fill="#2a2e35"/></svg><svg style="left:843.3px;top:590.4px" width="8.6" height="8.6" viewBox="0 0 8.6 8.6"><circle cx="4.3" cy="4.3" r="4.2" fill="#e5625b"/><path d="M2.5 2.5l3.6 3.6M6.1 2.5L2.5 6.1" stroke="#3a2a2a" stroke-width="1.1"/></svg><svg style="left:843.3px;top:612.2px" width="8.6" height="8.6" viewBox="0 0 8.6 8.6"><circle cx="4.3" cy="4.3" r="4.2" fill="#e6c54a"/><rect x="3.6" y="1.6" width="1.4" height="3.5" fill="#2a2e35"/><rect x="3.6" y="5.8" width="1.4" height="1.3" fill="#2a2e35"/></svg><svg style="left:845.5px;top:632.5px" width="4" height="10" viewBox="0 0 4 10"><circle cx="2" cy="1" r="1" fill="#d8dadd"/><path d="M0.5 3h3v5L2 10 0.5 8z" fill="#d8dadd"/></svg><svg style="left:844.5px;top:654.6px" width="6.5" height="8.5" viewBox="0 0 6.5 8.5"><path d="M0.5 0.5h5.5M1.5 0.5v3.5M5 0.5v3.5M0 4.3h6.5M3.25 4.3V8.5" stroke="#d8dadd" stroke-width="1.1"/><rect x="1.5" y="0.5" width="3.5" height="3.5" fill="#d8dadd"/></svg><svg style="left:862.6px;top:654.6px" width="9.5" height="8.5" viewBox="0 0 9.5 8.5"><path d="M0 0.6h9.5" stroke="#d8dadd" stroke-width="1.1"/><path d="M2.5 2.5v6M0.8 4.3l1.7-1.8 1.7 1.8M7 2.5v6M5.3 4.3L7 2.5l1.7 1.8" fill="none" stroke="#d8dadd" stroke-width="1.3"/></svg>
  <!-- ===== right dock ===== -->
<div class="a" style="left:887.7px;top:52.4px;width:183.7px;height:18.2px;background:#36687c;"></div><div class="t " style="left:891.4px;top:55.88px;font-size:9.2px;color:#dce6ec">Start [ID: 1]</div><svg style="left:1056.5px;top:57px" width="9" height="9" viewBox="0 0 9 9"><rect x="3" y="0" width="3" height="1.2" rx="0.4" fill="#e3e7ea"/><rect x="0" y="0.9" width="9" height="1.7" rx="0.8" fill="#e3e7ea"/><path d="M0.5 3.2h8v4.9c0 0.5-0.4 0.9-0.9 0.9H1.4c-0.5 0-0.9-0.4-0.9-0.9z" fill="#e3e7ea"/><rect x="1.5" y="4.1" width="1.4" height="3.6" fill="#36687c"/><rect x="3.8" y="4.1" width="1.4" height="3.6" fill="#36687c"/><rect x="6.1" y="4.1" width="1.4" height="3.6" fill="#36687c"/></svg><div class="a" style="left:887.7px;top:375px;width:183.7px;height:18.3px;background:#243752;"></div><div class="t " style="left:891.4px;top:378.88px;font-size:9.2px;color:#a9c3de">Edges:</div><div class="a" style="left:887.7px;top:396.3px;width:183.7px;height:1px;background:#363c45;"></div><div class="t " style="left:893.3px;top:405.88px;">From Node:</div><div class="t " style="left:950px;top:405.88px;">1</div><div class="t " style="left:962.8px;top:405.88px;">From Slot:</div><div class="t " style="left:1012.5px;top:405.88px;">0</div><div class="t " style="left:893.3px;top:426.68px;">To Node:</div><div class="t " style="left:949.7px;top:426.68px;">2</div><div class="t " style="left:962.8px;top:426.68px;">To Slot:</div><div class="t " style="left:1012.5px;top:426.68px;">0</div><div class="a" style="left:892px;top:452.3px;width:8.8px;height:8.8px;background:#5a5f67;border-radius:1.5px"></div><div class="t " style="left:909.9px;top:451.08px;font-size:9.4px;">Override colour:</div><div class="a" style="left:983px;top:448.8px;width:71.3px;height:15.8px;background:#30343a;border-radius:2px"></div><div class="a" style="left:985.3px;top:450.2px;width:66.9px;height:13px;background:#6b6d70;"></div><div class="a" style="left:890.9px;top:469px;width:68.9px;height:18.5px;background:#2e3239;border-radius:2px"></div><svg style="left:895px;top:474.3px" width="9" height="9" viewBox="0 0 9 9"><rect x="3" y="0" width="3" height="1.2" rx="0.4" fill="#e3e4e6"/><rect x="0" y="0.9" width="9" height="1.7" rx="0.8" fill="#e3e4e6"/><path d="M0.5 3.2h8v4.9c0 0.5-0.4 0.9-0.9 0.9H1.4c-0.5 0-0.9-0.4-0.9-0.9z" fill="#e3e4e6"/><rect x="1.5" y="4.1" width="1.4" height="3.6" fill="#2e3239"/><rect x="3.8" y="4.1" width="1.4" height="3.6" fill="#2e3239"/><rect x="6.1" y="4.1" width="1.4" height="3.6" fill="#2e3239"/></svg><div class="t " style="left:907.3px;top:472.78px;">Delete Edge</div>
  <!-- left dock tabs -->
  <div class="t dim" style="left:9.5px;top:31.4px">Scene</div>
  <div class="t dim" style="left:48px;top:31.4px">Import</div>
  <div class="a tab" style="left:83px;top:28px;width:65px;height:17px"></div>
  <div class="t" style="left:90px;top:31.4px">ParleyStores</div>
  <svg style="left:218px;top:31px" width="3" height="11" viewBox="0 0 3 11"><circle cx="1.5" cy="1.5" r="1" fill="#9a9ea5"/><circle cx="1.5" cy="5.5" r="1" fill="#9a9ea5"/><circle cx="1.5" cy="9.5" r="1" fill="#9a9ea5"/></svg>

  <!-- main tabs -->
  <div class="a tab" style="left:227px;top:28px;width:90px;height:17px"></div>
  <svg style="left:234px;top:32px" width="9" height="9" viewBox="0 0 9 9"><rect x="0.5" y="0.5" width="8" height="8" rx="1.5" fill="none" stroke="#8fd46e" stroke-width="1"/><path d="M0.5 3.2h8M0.5 5.8h8" stroke="#8fd46e" stroke-width="1"/></svg>
  <div class="t" style="left:246.5px;top:31.2px">main_panel</div>
  <svg style="left:301px;top:33px" width="8" height="8" viewBox="0 0 8 8"><path d="M1 1l6 6M7 1L1 7" stroke="#dcdee0" stroke-width="1.3"/></svg>
  <svg style="left:323px;top:32px" width="10" height="10" viewBox="0 0 10 10"><path d="M5 0.5v9M0.5 5h9" stroke="#7d828a" stroke-width="1.2"/></svg>
  <svg style="left:865px;top:32px" width="10" height="10" viewBox="0 0 10 10"><path d="M0.5 3.5V0.5h3M6.5 0.5h3v3M9.5 6.5v3h-3M3.5 9.5h-3v-3M1 1l2.5 2.5M9 1L6.5 3.5M9 9L6.5 6.5M1 9l2.5-2.5" fill="none" stroke="#dcdee0" stroke-width="1.2"/></svg>

  <!-- right dock tabs -->
  <div class="t dim" style="left:888px;top:31.5px">Node</div>
  <div class="t dim" style="left:924px;top:31.5px">History</div>
  <div class="a tab" style="left:960px;top:28px;width:62px;height:17px"></div>
  <div class="t" style="left:967px;top:31.5px">ParleyNode</div>
  <svg style="left:1048.3px;top:33px" width="8.6" height="8.6" viewBox="0 0 8 8"><circle cx="4" cy="4" r="3.8" fill="#e3e4e6"/><path d="M4.8 2L2.8 4l2 2" fill="none" stroke="#3a414b" stroke-width="1.2"/></svg>
  <svg style="left:1058.2px;top:33px" width="8.6" height="8.6" viewBox="0 0 8 8"><circle cx="4" cy="4" r="3.8" fill="#6b7079"/><path d="M3.2 2l2 2-2 2" fill="none" stroke="#2a2e35" stroke-width="1.2"/></svg>
  <svg style="left:1071px;top:31px" width="3" height="11" viewBox="0 0 3 11"><circle cx="1.5" cy="1.5" r="1" fill="#9a9ea5"/><circle cx="1.5" cy="5.5" r="1" fill="#9a9ea5"/><circle cx="1.5" cy="9.5" r="1" fill="#9a9ea5"/></svg>

  <!-- parley edges tabs -->
  <div class="a tab" style="left:881px;top:351px;width:64px;height:17px"></div>
  <div class="t" style="left:888px;top:354.1px">ParleyEdges</div>
  <svg style="left:1071px;top:354px" width="3" height="11" viewBox="0 0 3 11"><circle cx="1.5" cy="1.5" r="1" fill="#9a9ea5"/><circle cx="1.5" cy="5.5" r="1" fill="#9a9ea5"/><circle cx="1.5" cy="9.5" r="1" fill="#9a9ea5"/></svg>

  <!-- filesystem tabs -->
  <div class="a tab" style="left:2px;top:515px;width:58px;height:17px"></div>
  <div class="t" style="left:9.5px;top:519.2px">FileSystem</div>
  <svg style="left:218px;top:518px" width="3" height="11" viewBox="0 0 3 11"><circle cx="1.5" cy="1.5" r="1" fill="#9a9ea5"/><circle cx="1.5" cy="5.5" r="1" fill="#9a9ea5"/><circle cx="1.5" cy="9.5" r="1" fill="#9a9ea5"/></svg>
  <svg style="left:330px;top:168px" width="14" height="17" viewBox="330 168 14 17"><path d="M333.2 170.8V180l2.4-2.2 1.8 3.9 1.7-0.8-1.8-3.8h3.3z" fill="#111" stroke="#a9adb2" stroke-width="0.9" stroke-linejoin="round"/></svg>
  <div class="a" style="left:0;top:0;width:1080px;height:674px;border-radius:7px;box-shadow:inset 0 0 0 1px #45494e"></div>
</div>
</body></html>
